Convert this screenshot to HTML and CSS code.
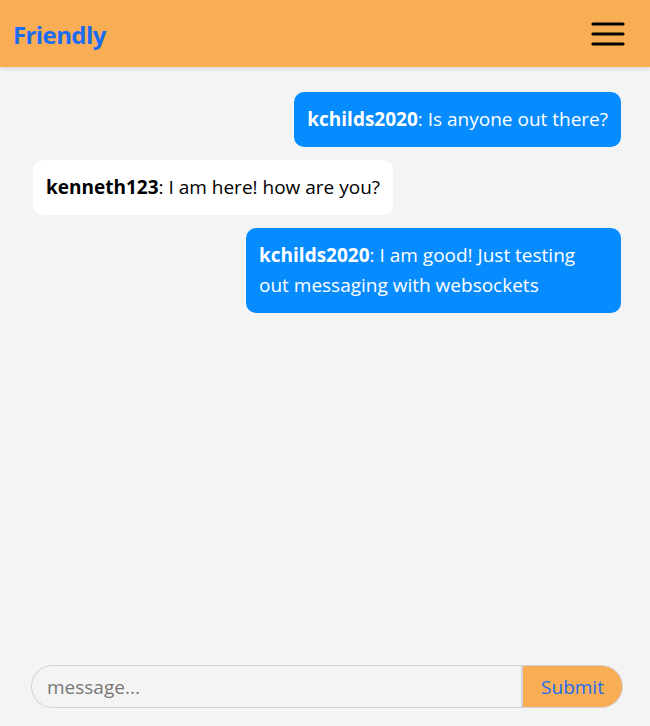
FILE: index.html
```html
<!DOCTYPE html>
<html>
<head>
<meta charset="utf-8">
<link rel="stylesheet" href="styles.css">
</head>
<body>
<div class="app">
  <header class="topbar">
    <div class="brand">Friendly</div>
    <button class="menu" aria-label="menu">
      <svg width="34" height="26" viewBox="0 0 34 26"><g stroke="#000" stroke-width="3.2" stroke-linecap="round"><line x1="2" y1="3" x2="32" y2="3"/><line x1="2" y1="13" x2="32" y2="13"/><line x1="2" y1="23" x2="32" y2="23"/></g></svg>
    </button>
  </header>
  <main class="messages">
    <div class="msg mine"><b>kchilds2020</b>: Is anyone out there?</div>
    <div class="msg theirs"><b>kenneth123</b>: I am here! how are you?</div>
    <div class="msg mine"><b>kchilds2020</b>: I am good! Just testing out messaging with websockets</div>
  </main>
  <form class="composer">
    <input class="field" type="text" placeholder="message...">
    <button class="submit" type="button">Submit</button>
  </form>
</div>
</body>
</html>
```
FILE: styles.css
```css
* { box-sizing: border-box; }
html, body { margin: 0; padding: 0; }
body {
  background: #f4f4f4;
  font-family: "Open Sans", "Noto Sans", sans-serif;
  height: 726px;
  overflow: hidden;
}
.app {
  display: flex;
  flex-direction: column;
  height: 726px;
}
.topbar {
  height: 67px;
  background: #f9ae55;
  display: flex;
  align-items: center;
  justify-content: space-between;
  padding: 0 25px 0 13px;
  box-shadow: 0 2px 4px rgba(0,0,0,0.12);
  position: relative;
  z-index: 1;
}
.brand {
  color: #1a6cf2;
  font-weight: 700;
  font-size: 24px;
  letter-spacing: -0.6px;
  margin-top: 1px;
}
.menu {
  background: none;
  border: 0;
  padding: 0;
  display: flex;
}
.messages {
  flex: 1;
  display: flex;
  flex-direction: column;
  gap: 13px;
  padding: 25px 29px 0 33px;
}
.msg {
  font-size: 19px;
  line-height: 30px;
  padding: 12px 13px 13px 13px;
  border-radius: 10px;
  max-width: 375px;
}
.msg b { font-weight: 700; }
.mine {
  align-self: flex-end;
  background: #078cff;
  color: #fff;
}
.theirs {
  align-self: flex-start;
  background: #fff;
  color: #000;
}
.composer {
  display: flex;
  margin: 0 27px 18px 31px;
  height: 43px;
}
.field {
  flex: 1;
  border: 1px solid #d2d2da;
  border-right: 0;
  border-radius: 22px 0 0 22px;
  background: #f4f4f4;
  font-family: inherit;
  font-size: 19px;
  padding: 0 15px;
  color: #333;
  outline: none;
}
.field::placeholder { color: #777; }
.submit {
  width: 102px;
  border: 1px solid #d2d2da;
  border-left: 2px solid #d2d2da;
  border-radius: 0 22px 22px 0;
  background: #f9ae55;
  color: #1a6cf2;
  font-family: inherit;
  font-size: 19px;
  padding: 0;
}
```
